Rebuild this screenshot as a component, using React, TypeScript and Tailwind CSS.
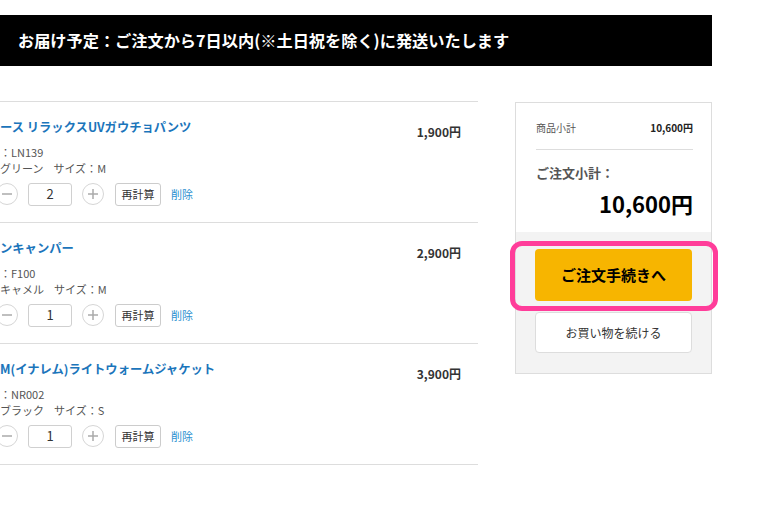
import React from "react";

const items = [
  { name: "ース リラックスUVガウチョパンツ", code: "：LN139", color: "グリーン", size: "M", qty: 2, price: "1,900円" },
  { name: "ンキャンパー", code: "：F100", color: "キャメル", size: "M", qty: 1, price: "2,900円" },
  { name: "M(イナレム)ライトウォームジャケット", code: "：NR002", color: "ブラック", size: "S", qty: 1, price: "3,900円" },
];

function Circle({ kind }: { kind: "minus" | "plus" }) {
  return (
    <div className="w-[22px] h-[22px] rounded-full border border-[#d6d6d6] bg-white flex items-center justify-center shrink-0">
      <svg width="12" height="12" viewBox="0 0 12 12">
        <path d="M1 6h10" stroke="#aaaaaa" strokeWidth="1.5" />
        {kind === "plus" && <path d="M6 1v10" stroke="#aaaaaa" strokeWidth="1.5" />}
      </svg>
    </div>
  );
}

export default function App() {
  return (
    <div
      className="w-[770px] h-[506px] bg-white overflow-hidden pt-[15px]"
      style={{ fontFamily: '"Noto Sans CJK JP", "Noto Sans", sans-serif' }}
    >
      <div className="w-[712px] h-[51px] bg-black flex items-center pl-[18px]">
        <span className="text-white font-bold text-[16.2px] leading-none">
          お届け予定：ご注文から7日以内(※土日祝を除く)に発送いたします
        </span>
      </div>

      <div className="flex mt-[35px] items-start">
        <div className="w-[478px] border-t border-[#dddddd]">
          {items.map((it, i) => (
            <div key={i} className="border-b border-[#dddddd] h-[121px] pt-[15px] pr-[17px] flex justify-between">
              <div className="flex flex-col">
                <div className="text-[12.3px] leading-[20px] font-bold text-[#1b75bb] whitespace-nowrap">{it.name}</div>
                <div className="mt-[7px] text-[11px] leading-[16px] text-[#555555] whitespace-nowrap">{it.code}</div>
                <div className="text-[11px] leading-[16px] text-[#555555] whitespace-nowrap flex">
                  <span>{it.color}</span>
                  <span className="ml-[10px]">サイズ：{it.size}</span>
                </div>
                <div className="mt-[6px] flex items-center -ml-[4px] h-[24px]">
                  <Circle kind="minus" />
                  <div className="ml-[10px] w-[44px] h-[23px] border border-[#d0d0d0] rounded-[3px] flex items-center justify-center text-[13px] text-[#333333]">
                    {it.qty}
                  </div>
                  <div className="ml-[10px]">
                    <Circle kind="plus" />
                  </div>
                  <div className="ml-[11px] w-[46px] h-[23px] border border-[#cccccc] rounded-[3px] flex items-center justify-center text-[11px] text-[#333333] bg-white">
                    再計算
                  </div>
                  <div className="ml-[10px] text-[11px] text-[#2a8fd0]">削除</div>
                </div>
              </div>
              <div className="pt-[5px] text-[12px] leading-[20px] font-bold text-[#333333]">{it.price}</div>
            </div>
          ))}
        </div>

        <div className="ml-[37px] mt-[1px] w-[197px] border border-[#dddddd]">
          <div className="bg-white pl-[20px] pr-[18px] pt-[16px] pb-[16px]">
            <div className="flex justify-between items-center h-[16px]">
              <span className="text-[10px] text-[#555555]">商品小計</span>
              <span className="text-[10px] font-bold text-[#222222]">10,600円</span>
            </div>
            <div className="mt-[14px] border-t border-[#dddddd]" />
            <div className="mt-[13px] text-[13px] leading-[20px] font-bold text-[#555555]">ご注文小計：</div>
            <div className="mt-[7px] text-right text-[22px] leading-[26px] font-bold text-black">10,600円</div>
          </div>
          <div className="bg-[#f3f3f3] px-[19px] pt-[17px] pb-[20px] flex flex-col">
            <div className="relative">
              <div className="h-[52px] rounded-[4px] bg-[#f7b500] flex items-center justify-center text-[15px] font-bold text-black">
                ご注文手続きへ
              </div>
              <div className="absolute -left-[25px] -right-[26px] -top-[8px] -bottom-[10px] border-[5px] border-[#ff3d9a] rounded-[12px] pointer-events-none" />
            </div>
            <div className="mt-[11px] h-[41px] rounded-[4px] bg-white border border-[#dddddd] flex items-center justify-center text-[12px] text-[#333333]">
              お買い物を続ける
            </div>
          </div>
        </div>
      </div>
    </div>
  );
}
